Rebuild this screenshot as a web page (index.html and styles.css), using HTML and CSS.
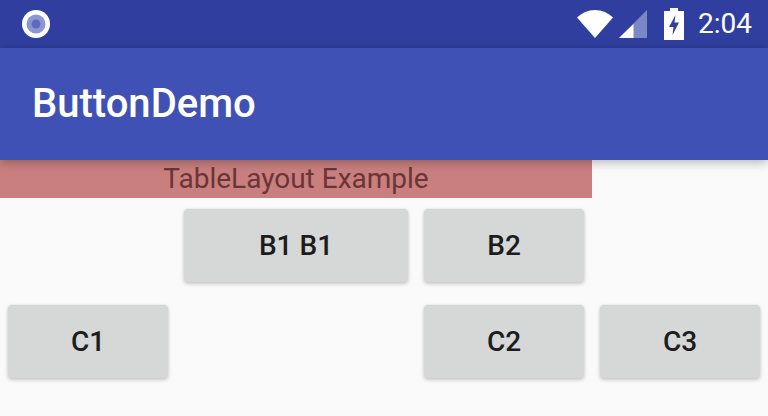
FILE: index.html
```html
<!DOCTYPE html>
<html lang="en">
<head>
<meta charset="utf-8">
<title>ButtonDemo</title>
<link rel="stylesheet" href="styles.css">
</head>
<body>
<div class="screen">
  <header class="status">
    <svg class="notif" width="32" height="32" viewBox="0 0 32 32"><circle cx="16" cy="16" r="14" fill="#fff"/><circle cx="16" cy="16" r="9.5" fill="#8c96d0"/><circle cx="16" cy="16" r="4.5" fill="#5c6bc0"/></svg>
    <div class="status-right">
      <svg class="wifi" width="36" height="28" viewBox="0 0 36 28"><path d="M0 7.5C4.8 3 11 0 18 0s13.200 3 18 7.500L18 28z" fill="#fff"/></svg>
      <svg class="signal" width="28" height="28" viewBox="0 0 28 28"><path d="M28 0v28H0z" fill="#7c87c6"/><path d="M14.500 14v14H0z" fill="#fff"/></svg>
      <svg class="battery" width="20" height="32" viewBox="0 0 20 32"><path fill-rule="evenodd" d="M6 0h8v3h6v29H0V3h6zM11.500 7L5 19h4.500l-1 8L15 14.500h-4.500z" fill="#fff"/></svg>
      <span class="clock">2:04</span>
    </div>
  </header>
  <div class="appbar"><h1 class="app-title">ButtonDemo</h1></div>
  <main class="content">
    <div class="table">
      <div class="table-title">TableLayout Example</div>
      <div class="cell col2"><button class="btn">B1 B1</button></div>
      <div class="cell col3"><button class="btn">B2</button></div>
      <div class="cell col1"><button class="btn">C1</button></div>
      <div class="cell col3"><button class="btn">C2</button></div>
      <div class="cell col4"><button class="btn">C3</button></div>
    </div>
  </main>
</div>
</body>
</html>
```
FILE: styles.css
```css
* { box-sizing: border-box; }
html, body { margin: 0; padding: 0; }
body { width: 768px; height: 416px; overflow: hidden; background: #fafafa; font-family: Roboto, "Liberation Sans", sans-serif; }
.screen { display: flex; flex-direction: column; width: 768px; height: 416px; }
.status { height: 48px; background: #303f9f; display: flex; align-items: center; justify-content: space-between; padding: 0 16px 0 20px; color: #fff; }
.notif { display: block; }
.status-right { display: flex; align-items: center; }
.wifi { display: block; margin-right: 6px; }
.signal { display: block; margin-right: 17px; }
.battery { display: block; margin-right: 14px; }
.clock { font-size: 28px; font-weight: 400; line-height: 48px; }
.appbar { height: 112px; background: #3f51b5; display: flex; align-items: center; padding: 0 32px; box-shadow: 0 2px 10px rgba(0,0,0,.3); position: relative; z-index: 1; }
.app-title { margin: 0; color: #fff; font-size: 40px; font-weight: 500; line-height: 1; }
.content { flex: 1; }
.table { display: grid; width: 768px; grid-template-columns: 176px 240px 176px 176px; grid-template-rows: 38px 96px 96px; }
.table-title { grid-column: 1 / 4; background: #c97f7f; color: #6b3535; font-size: 28px; line-height: 38px; text-align: center; }
.cell { padding: 11px 8px 12px; }
.col1 { grid-column: 1; }
.col2 { grid-column: 2; }
.col3 { grid-column: 3; }
.col4 { grid-column: 4; }
.btn { display: block; width: 100%; height: 73px; border: 0; border-radius: 4px; padding: 0; background: #d6d7d7; color: #1c1c1c; font-family: inherit; font-size: 28px; font-weight: 500; box-shadow: 0 2px 4px rgba(0,0,0,.2), 0 0 2px rgba(0,0,0,.08); }
```
